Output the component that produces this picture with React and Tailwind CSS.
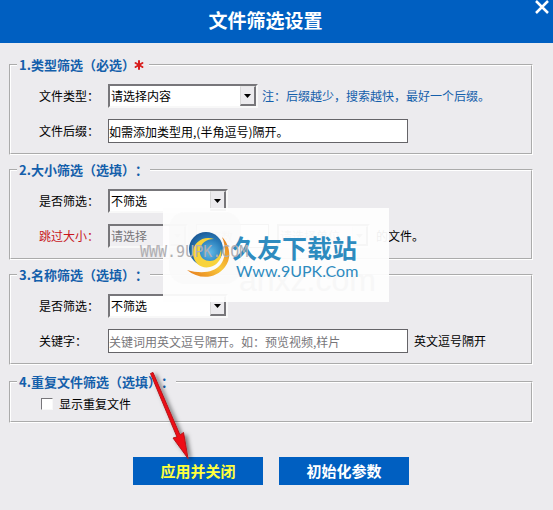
import { Asterisk } from "lucide-react";

// Recuadro con título sobre el borde
function Group({ title, required, children }) {
  return (
    <fieldset className="min-w-0 border-2 border-white [border-style:groove]">
      <legend className="ml-1.5 flex h-[18px] items-center px-0.5 text-[13px] leading-[18px] font-bold text-[#145fab]">
        {title}
        {required && <Asterisk className="-ml-1 size-4 text-[#d81e1e]" strokeWidth={3} />}
      </legend>
      {children}
    </fieldset>
  );
}

function Row({ id, label, labelClass = "", children }) {
  return (
    <div className="flex h-6 items-center">
      <label htmlFor={id} className={`w-[69px] shrink-0 ${labelClass}`}>
        {label}
      </label>
      {children}
    </div>
  );
}

function Dropdown({ id, text, className, disabled, ...rest }) {
  return (
    <span className={`relative inline-block h-6 shrink-0 ${className}`}>
      <select
        id={id}
        disabled={disabled}
        className="block h-6 w-full appearance-none rounded-none border-2 border-t-[#77767a] border-r-[#f8f8f8] border-b-[#f8f8f8] border-l-[#77767a] bg-white pl-px text-[12px] leading-5 text-black disabled:bg-[#f0eff2] disabled:text-[#77767a] disabled:opacity-100"
        {...rest}
      >
        <option>{text}</option>
      </select>
      <span className="pointer-events-none absolute inset-y-0.5 right-0.5 flex w-4 items-center justify-center border-t border-r-2 border-b-2 border-l border-t-[#e8e8e8] border-r-[#77767a] border-b-[#77767a] border-l-[#d8d8d8] bg-[#ecebee]">
        <svg width="7" height="4" viewBox="0 0 7 4" aria-hidden="true">
          <path d="M0 0h7L3.500 4z" fill={disabled ? "#8a8a8a" : "#000"} />
        </svg>
      </span>
    </span>
  );
}

function Logo() {
  return (
    <svg width="44" height="48" viewBox="0 0 44 48" className="shrink-0" aria-hidden="true">
      <defs>
        <radialGradient id="globe" cx="0.6" cy="0.6" r="0.7">
          <stop offset="0" stopColor="#62bdea" />
          <stop offset="0.55" stopColor="#2a7dba" />
          <stop offset="1" stopColor="#174f8c" />
        </radialGradient>
        <linearGradient id="swoosh" x1="0" y1="1" x2="1" y2="0">
          <stop offset="0" stopColor="#e5781c" />
          <stop offset="0.5" stopColor="#f9c83a" />
          <stop offset="1" stopColor="#e5781c" />
        </linearGradient>
      </defs>
      <path d="M35 6C43 14 45 27 38 36C29 48 12 49 0 39C14 43 27 42 34 33C39 26 39 15 35 6z" fill="url(#swoosh)" />
      <circle cx="19" cy="18" r="17" fill="url(#globe)" />
      <path d="M27 8C16 4 5 12 6 23C7 33 15 38 23 36C31 34 36 27 34 18C33 25 29 30 23 30C16 30 12 25 13 19C14 12 19 8 27 8z" fill="#f8d33b" />
    </svg>
  );
}

function Watermark() {
  return (
    <>
      <div className="absolute top-[165px] left-[163px] h-[94px] w-[226px] bg-[#fefefe]/94">
        <div className="absolute top-1 left-1.5 size-[72px] rounded-2xl bg-[#f8f8f8]/60" />
        <div className="absolute top-[54px] left-[76px] font-['Liberation_Sans'] text-[32px] leading-9 text-[#f7f7f7]">
          anxz.com
        </div>
        <div className="absolute top-[23px] left-6 flex items-start gap-px">
          <Logo />
          <div className="text-[#2e8bbf]">
            <div className="text-[25px] leading-8 font-bold">久友下载站</div>
            <div className="pl-1 font-[Lato] text-[16px] leading-4">Www.9UPK.Com</div>
          </div>
        </div>
      </div>
      <div className="absolute top-[200px] left-[140px] font-['DejaVu_Sans_Mono'] text-[15px] leading-[18px] text-[#b0afb2]">
        WWW.9UPK.COM
      </div>
    </>
  );
}

function Arrow() {
  return (
    <svg className="pointer-events-none absolute top-[325px] left-[140px]" width="70" height="96" viewBox="0 0 70 96" aria-hidden="true">
      <defs>
        <filter id="shadow" x="-50%" y="-20%" width="200%" height="140%">
          <feDropShadow dx="3" dy="2" stdDeviation="2" floodColor="#000" floodOpacity="0.5" />
        </filter>
      </defs>
      <path d="M10.500 5.500L13 4.500L40 67L43.500 64.500L48 90.500L33 70L37 69z" fill="#ee1118" stroke="#b5141a" strokeWidth="1" filter="url(#shadow)" />
    </svg>
  );
}

const inputClass =
  "h-6 border border-[#656468] bg-white text-[12px] leading-5 outline-none placeholder:text-[#77767a]";

export default function App() {
  return (
    <div className="min-h-screen bg-[#ecebee] font-['Noto_Sans_CJK_SC',sans-serif] text-[12px] leading-[18px] text-black [text-spacing-trim:space-all]">
      <header className="flex h-[43px] items-start bg-[#005fc1] text-white">
        <h1 className="flex-1 self-center pb-1 text-center text-[19px] leading-6 font-bold">文件筛选设置</h1>
        <button type="button" aria-label="关闭" className="flex w-[22px] justify-center">
          <svg width="16" height="15" viewBox="0 0 16 15" fill="none" stroke="currentColor" strokeWidth="2.500" aria-hidden="true">
            <path d="M2 1l12 12M14 1L2 13" />
          </svg>
        </button>
      </header>

      <main className="relative pt-[13px] pr-5 pb-6 pl-[9px]">
        <div className="flex flex-col gap-1.5">
          <Group title="1.类型筛选（必选）" required>
            <div className="flex flex-col gap-[11px] py-2.5 pl-7">
              <Row id="type" label="文件类型：">
                <Dropdown id="type" text="请选择内容" className="w-[150px]" />
                <span className="ml-1 whitespace-nowrap text-[#145fab]">注：后缀越少，搜索越快，最好一个后缀。</span>
              </Row>
              <Row id="suffix" label="文件后缀：">
                <input id="suffix" defaultValue="如需添加类型用,(半角逗号)隔开。" className={`w-[300px] ${inputClass}`} />
              </Row>
            </div>
          </Group>

          <Group title="2.大小筛选（选填）：">
            <div className="flex flex-col gap-[11px] py-2.5 pl-7">
              <Row id="size" label="是否筛选：">
                <Dropdown id="size" text="不筛选" className="w-[120px]" />
              </Row>
              <Row id="skip" label="跳过大小：" labelClass="text-[#c8161d]">
                <Dropdown id="skip" text="请选择" className="w-20" disabled />
                <input aria-label="大小" placeholder="填整数" className={`ml-2 w-[73px] ${inputClass}`} />
                <span className="ml-2 flex">
                  <Dropdown text="请选择单位" className="w-[93px]" disabled aria-label="单位" />
                </span>
                <span className="ml-1.5">的文件。</span>
              </Row>
            </div>
          </Group>

          <Group title="3.名称筛选（选填）：">
            <div className="flex flex-col gap-[11px] py-2.5 pl-7">
              <Row id="name" label="是否筛选：">
                <Dropdown id="name" text="不筛选" className="w-[120px]" />
              </Row>
              <Row id="keyword" label="关键字：">
                <input id="keyword" placeholder="关键词用英文逗号隔开。如：预览视频,样片" className={`w-[300px] ${inputClass}`} />
                <span className="ml-1.5">英文逗号隔开</span>
              </Row>
            </div>
          </Group>
        </div>

        <div className="mt-2">
          <Group title="4.重复文件筛选（选填）：">
            <label className="flex items-center gap-1.5 pt-1 pb-2 pl-[30px]">
              <input
                type="checkbox"
                className="size-3 appearance-none border border-t-[#77767a] border-r-[#f8f8f8] border-b-[#f8f8f8] border-l-[#77767a] bg-white checked:bg-[#005fc1]"
              />
              显示重复文件
            </label>
          </Group>
        </div>

        <div className="mt-[34px] flex justify-center gap-4 text-[15px] leading-7 font-bold">
          <button type="button" className="h-7 w-[130px] bg-[#005fc1] text-[#ffff3c]">应用并关闭</button>
          <button type="button" className="h-7 w-[130px] bg-[#005fc1] text-white">初始化参数</button>
        </div>

        <Watermark />
        <Arrow />
      </main>
    </div>
  );
}
